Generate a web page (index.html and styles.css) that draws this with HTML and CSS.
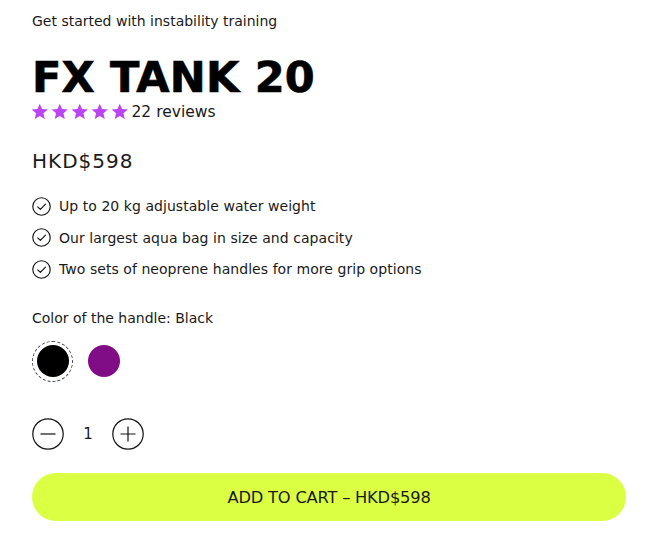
FILE: index.html
```html
<!DOCTYPE html>
<html lang="en">
<head>
<meta charset="utf-8">
<title>FX TANK 20</title>
<link rel="stylesheet" href="styles.css">
</head>
<body>
<main class="product">
  <p class="subtitle">Get started with instability training</p>
  <h1 class="title">FX TANK 20</h1>
  <div class="rating">
    <span class="stars">
      <svg class="star" viewBox="0 0 24 24"><path d="M12 17.27L18.18 21l-1.64-7.03L22 9.24l-7.19-.61L12 2 9.19 8.63 2 9.24l5.46 4.73L5.82 21z"/></svg>
      <svg class="star" viewBox="0 0 24 24"><path d="M12 17.27L18.18 21l-1.64-7.03L22 9.24l-7.19-.61L12 2 9.19 8.63 2 9.24l5.46 4.73L5.82 21z"/></svg>
      <svg class="star" viewBox="0 0 24 24"><path d="M12 17.27L18.18 21l-1.64-7.03L22 9.24l-7.19-.61L12 2 9.19 8.63 2 9.24l5.46 4.73L5.82 21z"/></svg>
      <svg class="star" viewBox="0 0 24 24"><path d="M12 17.27L18.18 21l-1.64-7.03L22 9.24l-7.19-.61L12 2 9.19 8.63 2 9.24l5.46 4.73L5.82 21z"/></svg>
      <svg class="star" viewBox="0 0 24 24"><path d="M12 17.27L18.18 21l-1.64-7.03L22 9.24l-7.19-.61L12 2 9.19 8.63 2 9.24l5.46 4.73L5.82 21z"/></svg>
    </span>
    <span class="reviews">22 reviews</span>
  </div>
  <p class="price">HKD$598</p>
  <ul class="features">
    <li><svg class="check" viewBox="0 0 20 20"><circle cx="10" cy="10" r="9.2"/><path d="M6 10.3l2.8 2.8 5.4-5.6"/></svg><span>Up to 20 kg adjustable water weight</span></li>
    <li><svg class="check" viewBox="0 0 20 20"><circle cx="10" cy="10" r="9.2"/><path d="M6 10.3l2.8 2.8 5.4-5.6"/></svg><span>Our largest aqua bag in size and capacity</span></li>
    <li><svg class="check" viewBox="0 0 20 20"><circle cx="10" cy="10" r="9.2"/><path d="M6 10.3l2.8 2.8 5.4-5.6"/></svg><span>Two sets of neoprene handles for more grip options</span></li>
  </ul>
  <p class="color-label">Color of the handle: Black</p>
  <div class="swatches">
    <span class="swatch selected"><span class="dot black"></span></span>
    <span class="swatch"><span class="dot purple"></span></span>
  </div>
  <div class="qty">
    <button class="qty-btn" aria-label="Decrease"><svg viewBox="0 0 32 32"><circle cx="16" cy="16" r="15.2"/><path d="M8.5 16h15"/></svg></button>
    <span class="qty-val">1</span>
    <button class="qty-btn" aria-label="Increase"><svg viewBox="0 0 32 32"><circle cx="16" cy="16" r="15.2"/><path d="M8.5 16h15M16 8.5v15"/></svg></button>
  </div>
  <button class="cart">ADD TO CART – HKD$598</button>
</main>
</body>
</html>
```

FILE: styles.css
```css
* { box-sizing: border-box; }
html, body { margin: 0; padding: 0; background: #fff; }
body {
  font-family: "DejaVu Sans", "Open Sans", sans-serif;
  color: #1a1a1a;
}
.product {
  width: 594px;
  margin-left: 32px;
  display: flex;
  flex-direction: column;
}
p { margin: 0; }
.subtitle {
  margin-top: 11px;
  font-size: 14px;
  line-height: 20px;
}
.title {
  margin: 24px 0 0;
  font-size: 43px;
  line-height: 44px;
  font-weight: 900;
  color: #000;
  letter-spacing: 0.2px;
  -webkit-text-stroke: 0.7px #000;
}
.rating {
  margin-top: 3px;
  height: 20px;
  display: flex;
  align-items: center;
  gap: 2px;
}
.stars { display: flex; gap: 0.5px; margin-left: -2px; }
.star { width: 19.5px; height: 19.5px; fill: #bb45f3; display: block; }
.reviews { font-size: 15.5px; line-height: 20px; }
.price {
  margin-top: 27px;
  font-size: 20px;
  line-height: 24px;
  letter-spacing: 1px;
}
.features {
  list-style: none;
  margin: 21px 0 0;
  padding: 0;
  display: flex;
  flex-direction: column;
  gap: 7.5px;
}
.features li {
  display: flex;
  align-items: center;
  gap: 8px;
  height: 24px;
  font-size: 14px;
}
.features li span { letter-spacing: 0.05px; }
.check {
  width: 19px; height: 19px;
  fill: none; stroke: #111; stroke-width: 1.2;
  stroke-linecap: round; stroke-linejoin: round;
  flex: none;
}
.color-label {
  margin-top: 27px;
  font-size: 14px;
  line-height: 20px;
}
.swatches {
  margin-top: 12.5px;
  display: flex;
  align-items: center;
  gap: 11px;
  height: 41px;
}
.swatch {
  width: 41px; height: 41px;
  border-radius: 50%;
  border: 1px dashed transparent;
  display: flex; align-items: center; justify-content: center;
}
.swatch.selected { border-color: #3a3f55; }
.dot { width: 32px; height: 32px; border-radius: 50%; display: block; }
.dot.black { background: #000; }
.dot.purple { background: #800d85; }
.swatch:not(.selected) { width: 32px; height: 32px; border: none; margin-left: 4px; }
.qty {
  margin-top: 36.5px;
  display: flex;
  align-items: center;
  height: 32px;
}
.qty-btn {
  width: 32px; height: 32px;
  padding: 0; border: 0; background: none;
  display: block;
}
.qty-btn svg {
  width: 32px; height: 32px; display: block;
  fill: none; stroke: #111; stroke-width: 1.2;
}
.qty-val {
  width: 48px;
  text-align: center;
  font-size: 15px;
}
.cart {
  margin-top: 23px;
  height: 48px;
  width: 594px;
  border: 0;
  border-radius: 24px;
  background: #dbff42;
  color: #1a1a1a;
  font-family: "DejaVu Sans", "Open Sans", sans-serif;
  font-size: 16.3px;
  letter-spacing: -0.2px;
}
```
